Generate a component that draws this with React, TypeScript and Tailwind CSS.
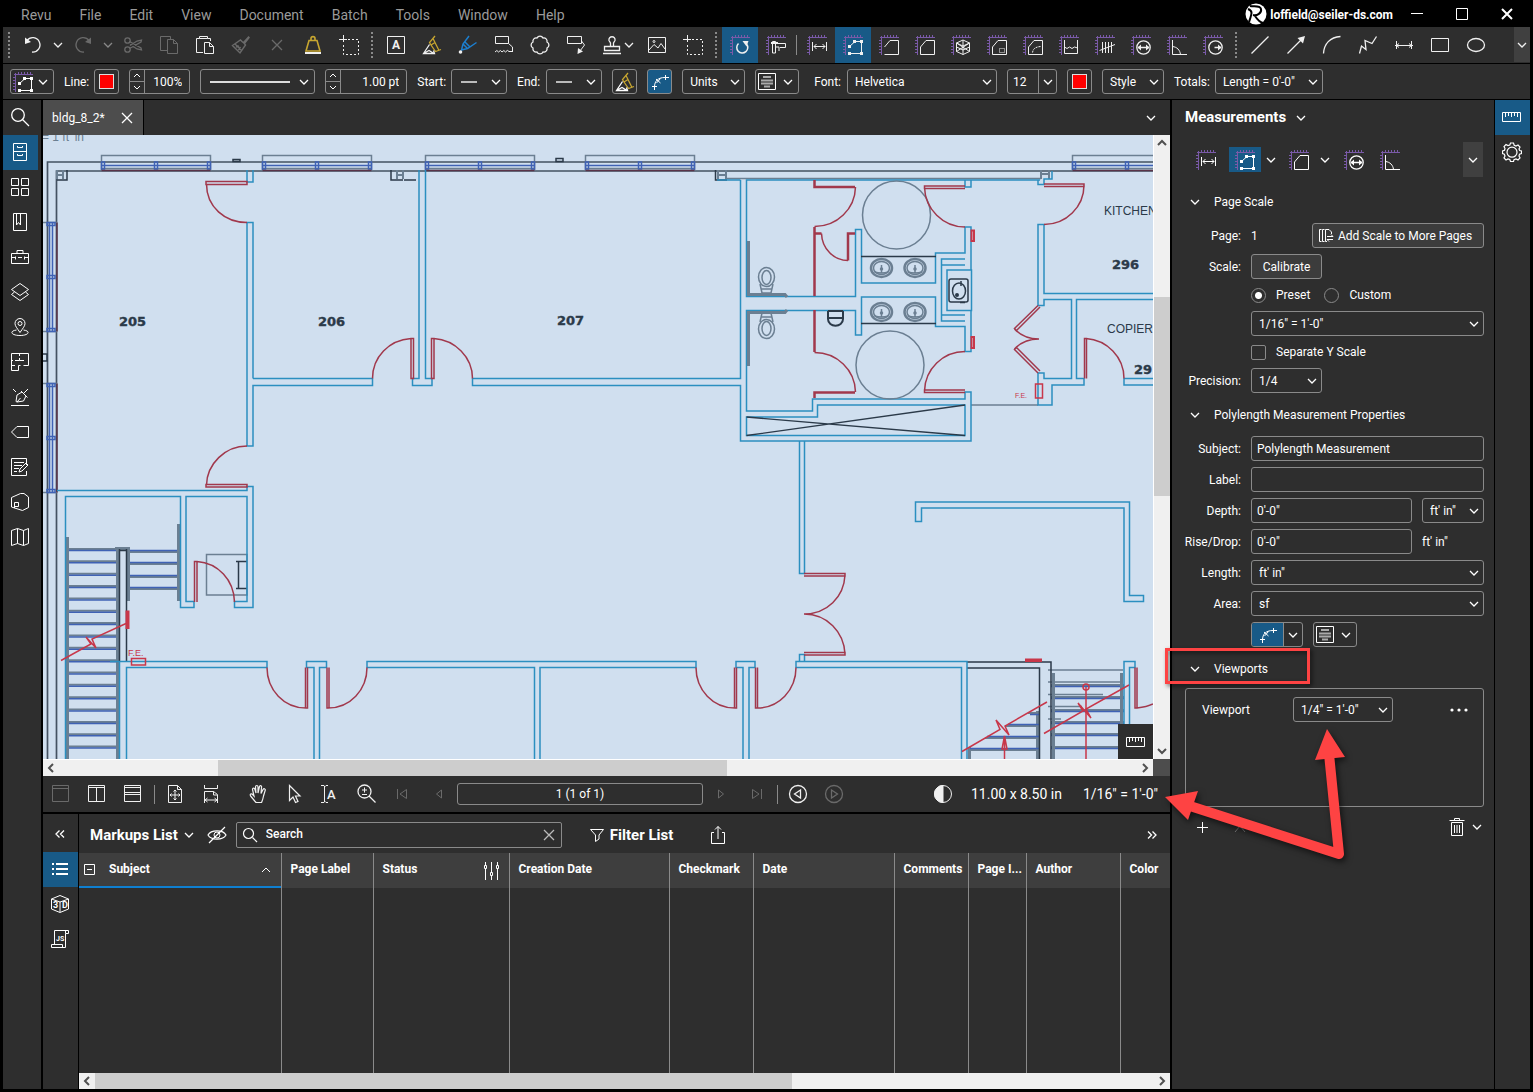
import React from "react";

const PURPLE = "#7a5aa8";
const WALL = "#2b8fc0";
const DOOR = "#a1384c";
const STEEL = "#6b7f92";
const INK = "#2b3a49";
const WINDOW = "#3f62b5";
const RED = "#c8374a";

const field =
  "h-[25px] rounded-[3px] border border-[#8a8a8a] bg-[#2e2e2e] text-xs text-white outline-none";

const Icon = (props: {
  d?: string;
  w?: number;
  h?: number;
  className?: string;
  children?: React.ReactNode;
}) => {
  const w = props.w || 20;
  const h = props.h || w;
  return (
    <svg
      width={w}
      height={h}
      viewBox={`0 0 ${w} ${h}`}
      fill="none"
      stroke="currentColor"
      className={"shrink-0 " + (props.className || "")}
      aria-hidden="true"
    >
      {props.d && <path d={props.d} />}
      {props.children}
    </svg>
  );
};

const Chevron = (props: { className?: string }) => (
  <Icon w={10} h={6} className={props.className}>
    <path strokeWidth="1.3" d="M1 1L5 5L9 1" />
  </Icon>
);

/* ---------- icons ---------- */

const Ruled = (props: { d?: string; children?: React.ReactNode }) => (
  <Icon>
    <path
      stroke={PURPLE}
      d="M1 2.5H20M2.5 1V20M5.5 0V2M8.5 0V2M11.5 0V2M14.5 0V2M17.5 0V2M0 5.5H2M0 8.5H2M0 11.5H2M0 14.5H2M0 17.5H2"
    />
    {props.d && <path d={props.d} />}
    {props.children}
  </Icon>
);

const LengthIcon = () => (
  <Ruled d="M5.5 7V16M19.5 7V16M7 11.5H18M9.5 9L7 11.5L9.5 14M15.5 9L18 11.5L15.5 14" />
);

const PolylengthIcon = () => (
  <Ruled d="M6 12L12 6.5H18.5V18.5H6">
    <path
      fill="currentColor"
      stroke="none"
      d="M5 10h3v3h-3zM10 5h3v3h-3zM17 5h3v3h-3zM17 17h3v3h-3zM5 17h3v3h-3z"
    />
  </Ruled>
);

const AreaIcon = () => <Ruled d="M5.5 19.5V12L11 5.5H19.5V19.5Z" />;

const DiameterIcon = () => (
  <Ruled>
    <circle cx="12.5" cy="12.5" r="6.7" strokeWidth="1.3" />
    <path strokeWidth="1.5" d="M7 12.5H18" />
    <path fill="currentColor" stroke="none" d="M6.5 12.5L10 9.5V15.5ZM18.5 12.5L15 9.5V15.5Z" />
  </Ruled>
);

const AngleIcon = () => (
  <Ruled d="M5.5 5V19.5H20M5.5 11.5C10 12 13 15 13.5 19.5" />
);

const RulerIcon = () => (
  <Icon w={20} h={12} d="M.5 1.5H18.5V10.5H.5ZM3.5 2V6M6.5 2V5M9.5 2V6M12.5 2V5M15.5 2V6" />
);

const SnipIcon = () => (
  <Icon>
    <path d="M4.5 0V7M0 4.5H8" />
    <path strokeDasharray="2 2" d="M9 4.5H19.5V19.5H4.5V8" />
  </Icon>
);

const HighlightIcon = () => (
  <Icon>
    <path
      stroke="#c7a630"
      strokeWidth="1.3"
      d="M13 1L7.5 7.5L9 10L13.5 16.5L19 14.5M11 3.5L17 15.5M9 10L13 7.5"
    />
    <path strokeWidth="1.3" d="M7.5 9.5L1.5 18.5H12.5L11.5 15.5M1.5 18.5L7 15.5L12 18.5" />
  </Icon>
);

const CurveIcon = () => (
  <Icon
    w={18}
    h={18}
    d="M3.5 17V14C3.5 8 7 4.5 14 4.5H18M1 13.5H6M14.5 2V7M5 6L9.5 10M9.5 5.5L5.5 10"
  />
);

const AlignIcon = () => (
  <Icon w={18} h={18}>
    <path d="M.5 .5H17.5V16.5H.5Z" />
    <path stroke="#aaa" strokeWidth="2" d="M5 4H13M3 7.5H15M3 10.5H15M6 13.5H12" />
  </Icon>
);

const Magnifier = () => (
  <Icon>
    <circle cx="8" cy="8" r="6.3" strokeWidth="1.3" />
    <path strokeWidth="1.3" d="M12.5 12.5L19 19" />
  </Icon>
);

const CloseX = (props: { className?: string }) => (
  <Icon w={12} className={props.className}>
    <path strokeWidth="1.3" d="M1 1L11 11M11 1L1 11" />
  </Icon>
);

/* ---------- small controls ---------- */

const ToolButton = (props: {
  label: string;
  active?: boolean;
  dim?: boolean;
  children: React.ReactNode;
}) => (
  <button
    aria-label={props.label}
    className={
      "flex h-9 w-9 shrink-0 items-center justify-center " +
      (props.active ? "bg-[#185a87] " : "hover:bg-[#3e3e3e] ") +
      (props.dim ? "text-[#6a6a6a]" : "text-[#f0f0f0]")
    }
  >
    {props.children}
  </button>
);

const MiniDrop = (props: { label: string; dim?: boolean }) => (
  <button
    aria-label={props.label}
    className={
      "flex h-9 w-[14px] shrink-0 items-center justify-center " +
      (props.dim ? "text-[#888]" : "text-[#f0f0f0]")
    }
  >
    <Chevron />
  </button>
);

const Grip = () => (
  <div className="mx-1 h-[26px] w-[3px] shrink-0 border-l-2 border-dotted border-[#8a8a8a]" />
);

const Select = (props: {
  label: string;
  id?: string;
  value: string;
  className?: string;
}) => (
  <span className={"relative inline-flex " + (props.className || "")}>
    <select
      id={props.id}
      aria-label={props.id ? undefined : props.label}
      className={field + " w-full appearance-none pr-5 pl-[7px]"}
      defaultValue={props.value}
    >
      <option>{props.value}</option>
    </select>
    <Chevron className="pointer-events-none absolute top-[10px] right-[5px]" />
  </span>
);

const IconDrop = (props: {
  label: string;
  className?: string;
  children: React.ReactNode;
}) => (
  <button
    aria-label={props.label}
    aria-haspopup="listbox"
    className={
      field + " flex items-center justify-between pr-[5px] pl-[2px] " + (props.className || "")
    }
  >
    {props.children}
    <Chevron />
  </button>
);

const Stepper = (props: { label: string; value: string; className: string }) => (
  <div className={field + " flex overflow-hidden " + props.className}>
    <div className="flex w-[15px] shrink-0 flex-col divide-y divide-[#8a8a8a] border-r border-[#8a8a8a]">
      <button aria-label={props.label + " up"} className="flex flex-1 items-center justify-center">
        <Icon w={8} h={5} d="M1 4L4 1L7 4" />
      </button>
      <button aria-label={props.label + " down"} className="flex flex-1 items-center justify-center">
        <Icon w={8} h={5} d="M1 1L4 4L7 1" />
      </button>
    </div>
    <input
      aria-label={props.label}
      className="w-full min-w-0 bg-transparent pr-[7px] text-right text-xs outline-none"
      defaultValue={props.value}
    />
  </div>
);

const Swatch = (props: { label: string }) => (
  <button
    aria-label={props.label}
    className="flex h-[25px] w-[25px] shrink-0 items-center justify-center rounded-[3px] border border-[#8a8a8a]"
  >
    <span className="h-[15px] w-[15px] border border-[#ddd] bg-[#f00]" />
  </button>
);

const ScrollArrow = (props: { label: string; d: string }) => (
  <button
    aria-label={props.label}
    className="flex h-4 w-4 shrink-0 items-center justify-center text-[#505050]"
  >
    <Icon w={10}>
      <path strokeWidth="2" d={props.d} />
    </Icon>
  </button>
);

/* ---------- top bars ---------- */

const menus = ["Revu", "File", "Edit", "View", "Document", "Batch", "Tools", "Window", "Help"];

const TitleBar = () => (
  <header className="flex h-[27px] items-center bg-black pr-[17px] pl-[18px]">
    <nav className="flex gap-7 pt-[3px] text-sm text-[#9a9a9a]">
      {menus.map((m) => (
        <button key={m}>{m}</button>
      ))}
    </nav>
    <div className="ml-auto flex items-center gap-[3px] text-xs font-bold text-white">
      <Icon w={22}>
        <circle cx="11" cy="11" r="10.5" fill="#fff" stroke="none" />
        <path
          stroke="#000"
          strokeWidth="2"
          d="M5 3C9 4 15 2 16 6C17 10 12 13 8 12M3 6C8 8 7 10 4 19M10 13C12 16 14 19 18 20"
        />
      </Icon>
      <span className="pt-[3px]">loffield@seiler-ds.com</span>
    </div>
    <div className="ml-[18px] flex items-center gap-[33px] text-white">
      <button aria-label="Minimize">
        <Icon w={12} d="M0 5.5H12" />
      </button>
      <button aria-label="Maximize">
        <Icon w={12} d="M.5 .5H11.5V11.5H.5Z" />
      </button>
      <button aria-label="Close">
        <Icon w={12}>
          <path strokeWidth="2" d="M1 1L11 11M11 1L1 11" />
        </Icon>
      </button>
    </div>
  </header>
);

const MainToolbar = () => (
  <div className="flex h-9 items-center bg-[#2e2e2e] pl-px">
    <Grip />
    <ToolButton label="Undo">
      <Icon>
        <path strokeWidth="1.3" d="M4 5.5A7.2 7.2 0 1 1 9 17" />
        <path fill="currentColor" stroke="none" d="M2 2.5V9L8 7Z" />
      </Icon>
    </ToolButton>
    <MiniDrop label="Undo history" />
    <ToolButton label="Redo" dim>
      <Icon>
        <path strokeWidth="1.3" d="M16 5.5A7.2 7.2 0 1 0 11 17" />
        <path fill="currentColor" stroke="none" d="M18 2.5V9L12 7Z" />
      </Icon>
    </ToolButton>
    <MiniDrop label="Redo history" dim />
    <ToolButton label="Cut" dim>
      <Icon>
        <path
          strokeWidth="1.3"
          d="M6.5 6.5L18 13L18.5 15L14 14L7 9.5M6.5 13.5L18 7L18.5 5L14 6L7 10.5"
        />
        <circle cx="4.5" cy="5.5" r="2.7" strokeWidth="1.3" />
        <circle cx="4.5" cy="14.5" r="2.7" strokeWidth="1.3" />
      </Icon>
    </ToolButton>
    <ToolButton label="Copy" dim>
      <Icon d="M8 15.5H1.5V1.5H11.5V4M8.5 4.5H14.5L18.5 8.5V18.5H8.5ZM14.5 4.5V8.5H18.5" />
    </ToolButton>
    <ToolButton label="Paste">
      <Icon d="M8 17.5H1.5V3.5H4.5V1.5H12.5V3.5H15.5V6M4.5 3.5H12.5M9.5 7.5H14.5L18.5 11.5V18.5H9.5ZM14.5 7.5V11.5H18.5" />
    </ToolButton>
    <ToolButton label="Format painter" dim>
      <Icon>
        <path
          strokeWidth="1.4"
          d="M18 1.5L12.5 7.5L14.5 10L9 18L1.500 10.5L9.5 5L12 7.5M18.500 2L13 9M4 9L10.500 15.500M5 12L8 11M7.500 15L9.500 12"
        />
      </Icon>
    </ToolButton>
    <ToolButton label="Delete" dim>
      <CloseX />
    </ToolButton>
    <ToolButton label="Weight">
      <Icon>
        <path stroke="#c7a630" strokeWidth="1.6" d="M6 5.5H14L17 16H3ZM8 5V3.5C8 1 12 1 12 3.5V5" />
        <path strokeWidth="2" d="M2 18H18" />
      </Icon>
    </ToolButton>
    <ToolButton label="Snapshot">
      <SnipIcon />
    </ToolButton>
    <Grip />
    <ToolButton label="Text box">
      <Icon d="M1.5 1.5H18.5V18.5H1.5Z">
        <text
          x="10"
          y="14"
          textAnchor="middle"
          fontSize="12"
          fontWeight="700"
          fill="currentColor"
          stroke="none"
        >
          A
        </text>
      </Icon>
    </ToolButton>
    <ToolButton label="Highlight">
      <HighlightIcon />
    </ToolButton>
    <ToolButton label="Pen">
      <Icon>
        <path
          stroke="#1c7fcf"
          strokeWidth="1.5"
          d="M11 1L5 9L3.5 15L9.5 13.5L18.5 7.5M5 9L9.5 13.5M7 7L12 12"
        />
        <circle cx="2.5" cy="17" r="1.8" fill="currentColor" stroke="none" />
      </Icon>
    </ToolButton>
    <ToolButton label="Eraser">
      <Icon d="M1.5 1.5H14.5V8.5H1.5ZM14.5 8.5L18.5 12V16M1 17Q3 14 4.5 17Q6.5 14 8 17Q10 14 11.5 17Q13.5 14 15 16.500H19" />
    </ToolButton>
    <ToolButton label="Cloud">
      <Icon>
        <path
          strokeWidth="1.3"
          d="M7 3A3.3 3.3 0 0 1 13 3A3.3 3.3 0 0 1 17 7A3.3 3.3 0 0 1 17 13A3.3 3.3 0 0 1 13 17A3.3 3.3 0 0 1 7 17A3.3 3.3 0 0 1 3 13A3.3 3.3 0 0 1 3 7A3.3 3.3 0 0 1 7 3Z"
        />
      </Icon>
    </ToolButton>
    <ToolButton label="Callout">
      <Icon d="M1.5 1.5H15.5V8.5H1.5ZM15.5 6L18.5 10L14 16">
        <path fill="currentColor" stroke="none" d="M11.5 19L12 13L17 16.5Z" />
      </Icon>
    </ToolButton>
    <ToolButton label="Stamp">
      <Icon>
        <path
          strokeWidth="1.3"
          d="M8.5 11.5V8L7 5.5C6 .5 14 .5 13 5.5L11.5 8V11.5M2.5 15.500V11.500H17.500V15.500ZM1 18.500H19"
        />
      </Icon>
    </ToolButton>
    <div className="mr-[3px] -ml-2">
      <MiniDrop label="Stamps" />
    </div>
    <ToolButton label="Image">
      <Icon d="M1.5 2.5H18.5V17.5H1.5ZM2 15L7 9.5L11 13L14 8.5L18 14">
        <circle cx="7" cy="6.5" r="1" />
      </Icon>
    </ToolButton>
    <ToolButton label="Crop image">
      <SnipIcon />
    </ToolButton>
    <Grip />
    <ToolButton label="Calibrate" active>
      <Ruled>
        <path strokeWidth="1.5" d="M8.5 8.5A5.5 5.5 0 1 0 16.5 9" />
        <path fill="currentColor" stroke="none" d="M12.5 6L18.5 6L16.5 11.5Z" />
      </Ruled>
    </ToolButton>
    <ToolButton label="Measure">
      <Ruled d="M6.5 18V6.5H9.5V18ZM9.5 8.5H19.5V12.5H14M9.5 12H13V16">
        <path strokeWidth="2" d="M5 8H12" />
      </Ruled>
    </ToolButton>
    <div className="mx-[2px] h-5 w-px shrink-0 bg-[#8a8a8a]" />
    <ToolButton label="Length">
      <LengthIcon />
    </ToolButton>
    <ToolButton label="Polylength" active>
      <PolylengthIcon />
    </ToolButton>
    <ToolButton label="Perimeter">
      <Ruled d="M5.5 12L11 5.5H19.5V19.5H5.5" />
    </ToolButton>
    <ToolButton label="Area">
      <AreaIcon />
    </ToolButton>
    <ToolButton label="Volume">
      <Ruled d="M12 5L18.5 8V16.5L12 19.5L5.5 16.5V8ZM5.5 8L12 11L18.5 8M12 5V19.5M5.5 12L12 15L18.5 12M5.5 16.5L18.5 8M18.5 16.5L5.5 8" />
    </ToolButton>
    <ToolButton label="Polygon cutout">
      <Ruled d="M5.5 19.5V12L11 5.5H19.5V19.5Z">
        <path strokeDasharray="1 1" d="M12.5 17.5V13.5H17.5V17.5Z" />
      </Ruled>
    </ToolButton>
    <ToolButton label="Ellipse cutout">
      <Ruled d="M5.5 19.5V12L11 5.5H19.5V19.5Z">
        <path strokeDasharray="2 1" d="M9.5 17.5C10 14 12 12 17.5 11.5" />
      </Ruled>
    </ToolButton>
    <ToolButton label="Dynamic fill">
      <Ruled d="M5.5 5V18.5H18.5V5M5.5 12L8 13.5L10.5 12L13 13.5L15.5 12L18.5 13" />
    </ToolButton>
    <ToolButton label="Count">
      <Ruled d="M7.5 7V18M10.5 7V18M13.5 7V18M16.5 7V18M4.5 15.5L20 9.5" />
    </ToolButton>
    <ToolButton label="Diameter">
      <DiameterIcon />
    </ToolButton>
    <ToolButton label="Angle">
      <AngleIcon />
    </ToolButton>
    <ToolButton label="Radius">
      <Ruled>
        <circle cx="12.5" cy="12.5" r="6.7" strokeWidth="1.3" />
        <path strokeWidth="1.5" d="M11.5 12.5H18" />
        <path fill="currentColor" stroke="none" d="M18.5 12.5L15 9.5V15.5Z" />
      </Ruled>
    </ToolButton>
    <Grip />
    <ToolButton label="Line">
      <Icon>
        <path strokeWidth="1.3" d="M1.5 18.5L18.5 1.5" />
      </Icon>
    </ToolButton>
    <ToolButton label="Arrow">
      <Icon>
        <path strokeWidth="1.3" d="M1.5 18.5L15 5" />
        <path fill="currentColor" stroke="none" d="M19 1L17 8.5L11.5 3Z" />
      </Icon>
    </ToolButton>
    <ToolButton label="Arc">
      <Icon>
        <path strokeWidth="1.3" d="M1.5 18.5C2 9 8 2 18.5 1.5" />
      </Icon>
    </ToolButton>
    <ToolButton label="Polyline">
      <Icon>
        <path strokeWidth="1.3" d="M1.5 18.5L3.5 11L8 14.5L7 5.5L14 8.5L18.5 1.5" />
      </Icon>
    </ToolButton>
    <ToolButton label="Dimension">
      <Icon d="M2.5 6V14M17.5 6V14M1 10.5H19M5 8.5L2.5 10.5L5 12.5M15 8.5L17.5 10.5L15 12.5" />
    </ToolButton>
    <ToolButton label="Rectangle">
      <Icon d="M1.5 3.5H18.5V16.5H1.5Z" />
    </ToolButton>
    <ToolButton label="Ellipse">
      <Icon>
        <ellipse cx="10" cy="10" rx="8.5" ry="6.5" strokeWidth="1.3" />
      </Icon>
    </ToolButton>
    <button
      aria-label="More tools"
      className="ml-auto flex h-[35px] w-4 items-center justify-center self-start bg-[#404040] text-[#f0f0f0]"
    >
      <Chevron />
    </button>
  </div>
);

const PropertyBar = () => (
  <div className="mt-px flex h-[35px] items-center gap-[10px] bg-[#2e2e2e] pl-[7px] text-xs text-white">
    <IconDrop label="Tool" className="w-11">
      <PolylengthIcon />
    </IconDrop>
    <div className="flex items-center gap-[5px]">
      Line: <Swatch label="Line color" />
    </div>
    <Stepper label="Opacity" value="100%" className="w-[61px]" />
    <IconDrop label="Line style" className="w-[115px]">
      <span className="ml-[7px] h-[2px] w-20 bg-[#ddd]" />
    </IconDrop>
    <Stepper label="Line width" value="1.00 pt" className="w-[82px]" />
    <div className="flex items-center gap-[5px]">
      Start:
      <IconDrop label="Line start" className="w-14">
        <span className="ml-[7px] h-[2px] w-4 bg-[#bbb]" />
      </IconDrop>
    </div>
    <div className="flex items-center gap-[6px]">
      End:
      <IconDrop label="Line end" className="w-14">
        <span className="ml-[7px] h-[2px] w-4 bg-[#bbb]" />
      </IconDrop>
    </div>
    <button
      aria-label="Highlight fill"
      className={field + " flex w-[25px] items-center justify-center"}
    >
      <HighlightIcon />
    </button>
    <button
      aria-label="Curve"
      className="flex h-[25px] w-[25px] items-center justify-center rounded-[3px] border border-[#8a8a8a] bg-[#185a87]"
    >
      <CurveIcon />
    </button>
    <Select label="Units" value="Units" className="w-[63px]" />
    <IconDrop label="Alignment" className="w-11">
      <AlignIcon />
    </IconDrop>
    <div className="ml-[5px] flex items-center gap-[6px]">
      <label htmlFor="font">Font:</label>
      <Select id="font" label="Font" value="Helvetica" className="w-[150px]" />
    </div>
    <div className={field + " flex w-[50px] overflow-hidden"}>
      <input
        aria-label="Font size"
        className="w-[30px] bg-transparent pl-[5px] outline-none"
        defaultValue="12"
      />
      <button
        aria-label="Font sizes"
        className="flex flex-1 items-center justify-center border-l border-[#8a8a8a]"
      >
        <Chevron />
      </button>
    </div>
    <Swatch label="Text color" />
    <Select label="Style" value="Style" className="w-[62px]" />
    <div className="flex items-center gap-[5px]">
      <label htmlFor="totals">Totals:</label>
      <Select id="totals" label="Totals" value={`Length = 0'-0"`} className="w-[108px]" />
    </div>
  </div>
);

/* ---------- left rail ---------- */

const railIcons = [
  { label: "File access", d: "M3.5 1.5H16.5V18.5H3.5ZM3.5 9.5H16.5M7.5 4V5.5H12.5V4M7.5 12V13.5H12.5V12" },
  { label: "Thumbnails", d: "M1.5 1.5H8.5V8.5H1.5ZM11.5 1.5H18.5V8.5H11.5ZM1.5 11.5H8.5V18.5H1.5ZM11.5 11.5H18.5V18.5H11.5Z" },
  { label: "Bookmarks", d: "M3.5 1.5H16.5V18.5H3.5ZM6.5 1.5V13L8.5 10.5L10.5 13V1.5" },
  { label: "Tool chest", d: "M1.5 6.5H18.5V16.5H1.5ZM7 6V3.5H13V6M1.5 10.5H5M8 10.5H12M15 10.5H18.5M5.5 9.5V12.5M14.5 9.5V12.5" },
  { label: "Layers", d: "M10 1.5L18.5 7.5L10 13.5L1.5 7.5ZM4.5 10L1.5 12.5L10 18.5L18.5 12.5L15.5 10" },
  { label: "Places", d: "M10 15.5C7 11 5 9 5 6.5A5 5 0 0 1 15 6.5C15 9 13 11 10 15.5ZM6.5 13C-1 14 1 18.5 10 18.5S21 14 13.5 13M10 4.5A2 2 0 1 1 10 8.5A2 2 0 1 1 10 4.5" },
  { label: "Spaces", d: "M1.5 1.5H18.5V13.5H13.5M10.5 13.5H8.5V18.5H1.5V1.5M9.5 1.5V4M9.5 6V8.5H5M1.5 8.5H3M9.5 8.5H14M5 13.5H1.5" },
  { label: "Signatures", d: "M1 18.5H19M6 14.5L7 8L12 5L16 9L13.5 14L7 15ZM11 4L17.5 10.5M14 6L18 2M7 15L10.5 11M3 2L6 5" },
  { label: "Tags", d: "M1.5 10L7 4.5H18.5V15.5H7Z" },
  { label: "Forms", d: "M16.5 8V1.5H1.5V18.5H16.5V14M4 5.5H14M4 8.5H12M4 11.5H9M4 14.5H7M9 15L10 12L16 6L18 8L12 14Z" },
  { label: "3D model", d: "M1.5 5.5L10.5 1.5L14 1.5L18.5 5V15.5L12.5 18.5L1.5 15ZM4.5 16V10.5H8.5V14.5H4.5" },
  { label: "Sets", d: "M1.5 3.5L7.5 1.5L13.5 3.5L18.5 1.5V16.5L13.5 18.5L7.5 16.5L1.5 18.5ZM7.5 1.5V16.5M13.5 3.5V18.5" },
];

const LeftRail = () => (
  <aside className="flex w-[38px] shrink-0 flex-col bg-[#2e2e2e] text-white">
    <button
      aria-label="Search"
      className="flex h-[35px] w-[35px] items-center justify-center pr-px pb-px"
    >
      <Magnifier />
    </button>
    {railIcons.map((r, i) => (
      <button
        key={r.label}
        aria-label={r.label}
        className={
          "flex h-[35px] w-[35px] items-center justify-center pr-px pb-px " +
          (i === 0 ? "bg-[#185a87]" : "")
        }
      >
        <Icon d={r.d} />
      </button>
    ))}
  </aside>
);

/* ---------- floor plan ---------- */

const leftTreads = Array.from({ length: 17 }, (_, i) => 550 + i * 12.35);
const rightTreads = [686, 698, 711, 723, 735, 748];

const TopWindow = (props: { x: number }) => {
  const x = props.x;
  return (
    <g>
      <rect x={x} y="155.5" width="109" height="15" stroke={STEEL} />
      <path stroke={STEEL} d={`M${x} 168.5h109`} />
      <path
        stroke={WINDOW}
        d={`M${x} 165.5h109M${x} 162h3v7h-3zM${x + 53} 162h3v7h-3zM${x + 106} 162h3v7h-3z`}
      />
      <path stroke="#5a3448" d={`M${x} 170.5h109`} />
    </g>
  );
};

const SideWindow = (props: { y: number }) => {
  const y = props.y;
  return (
    <g>
      <path stroke={STEEL} d={`M43 ${y}h14M43 ${y + 109}h14`} />
      <path stroke="#5a3448" d={`M57 ${y}v109`} />
      <path
        stroke={WINDOW}
        d={`M49.5 ${y}v109M52.5 ${y}v109M47 ${y}h8v3h-8zM47 ${y + 53}h8v3h-8zM47 ${y + 106}h8v3h-8z`}
      />
    </g>
  );
};

const Basin = (props: { x: number; y: number }) => (
  <g stroke={STEEL}>
    <ellipse cx={props.x} cy={props.y} rx="10.5" ry="9" strokeWidth="2.5" />
    <ellipse cx={props.x} cy={props.y} rx="8" ry="6.5" />
    <path d={`M${props.x - 7} ${props.y + 4}q7 2 14 0M${props.x} ${props.y - 3}v8`} />
    <circle cx={props.x} cy={props.y + 1} r="1" />
  </g>
);

const FloorPlan = () => (
  <svg
    viewBox="43 135 1110 624"
    preserveAspectRatio="xMinYMin slice"
    className="block h-[624px] w-full bg-[#d0dfef]"
    fill="none"
    strokeWidth="1.5"
    role="img"
    aria-label="Floor plan bldg_8_2"
  >
    <text x="42" y="141" fontSize="12" fill={STEEL} fontFamily="Liberation Sans, sans-serif">
      = 1 ft' in"
    </text>

    {/* outer shell */}
    <g stroke={INK}>
      <path d="M47.5 759V162H1153M56.5 759V171H1153" strokeWidth="1.7" opacity=".85" />
      <path d="M233 159.5h7v2h-7zM556 158.5h7v3h-7zM43 354h4v7h-4M404 180H416M391 170v10h12" />
      <path d="M57 180H67V170M715.5 170V180H727" />
    </g>
    <g stroke={STEEL}>
      <path
        strokeWidth="2"
        d="M57 170v9M63 170v9M57 175h6M397 170v9M403 170v9M397 175h6M718 170v9M726 170v9M718 175h8M1041 170v9M1049 170v9M1041 174h8"
      />
      <path d="M727 178.5H1041M971 405H1038" />
    </g>
    <TopWindow x={101.5} />
    <TopWindow x={262.5} />
    <TopWindow x={425.5} />
    <TopWindow x={585.5} />
    <TopWindow x={1072.5} />
    <SideWindow y={222.5} />
    <SideWindow y={383.5} />

    {/* stairs, left core */}
    {leftTreads.map((y) => (
      <g key={y}>
        <path stroke={STEEL} strokeWidth="2" d={`M66 ${y - 1}H119`} />
        <path stroke={WINDOW} d={`M66 ${y + 0.5}H119`} />
      </g>
    ))}
    {[551, 563, 576, 588].map((y) => (
      <g key={y}>
        <path stroke={STEEL} strokeWidth="2" d={`M128 ${y + 1}H180`} />
        <path stroke={WINDOW} d={`M128 ${y - 0.5}H180`} />
      </g>
    ))}
    <path
      stroke={STEEL}
      strokeWidth="3"
      d="M67.5 537V759M117.5 549V759M128.5 549V601M178.5 524V601M115 548.5H130"
    />
    <path stroke={INK} d="M119.5 549V662M126.5 549V662M119 550.5H127" />
    <path stroke={STEEL} d="M206.5 554.5H247V595H206.5Z" />
    <path stroke={INK} d="M238.5 561V588M236 561.5H247M236 588.5H247" />

    {/* stairs, right core */}
    {rightTreads.map((y) => (
      <g key={y}>
        <path stroke={STEEL} strokeWidth="2" d={`M1051 ${y - 1}H1124`} />
        <path stroke={WINDOW} d={`M1051 ${y + 0.5}H1124`} />
      </g>
    ))}
    <path
      stroke={STEEL}
      strokeWidth="3"
      d="M1053.5 673V759M1121.5 673V724M1037.5 711V759M969.5 747V759"
    />
    <path
      stroke={STEEL}
      d="M1048 670H1123M1048 682H1123M1048 694.5H1103M1048 706.5H1082M1048 719H1061"
    />
    <path stroke={STEEL} strokeWidth="2" d="M1028 713H1039M1006 726H1040M985 738H1040M970 750H1040" />
    <path stroke={WINDOW} d="M1030 714.5H1039M1008 724.5H1040M987 736.5H1040M970 748.5H1040" />
    <path stroke={INK} d="M967 662H1051V759M967 668H1039.5V759" />

    {/* interior walls */}
    <g stroke={WALL}>
      <path d="M247 170V182H253V170M253 378.5V222.5H247V446H253V385.5H372.5V378.5H253" />
      <path d="M419 170V378.5H412.5V385.5H432V378.5H425.5V170" />
      <path d="M740.5 180V378.5H472.5V385.5H740.5V441H971V392H965V399H812.5V411H746.5V310.5H855.5V335H861.5V297H935.5V326.5H965V351.5H971V310" />
      <path d="M717 180H740.5M1040 180H746.5V296.5H855.5V229.5H861.5V283H935.5V253H965V227H971V270" />
      <path d="M965 259H941.5V321H965M965 265H941.5M965 315H941.5M947 270H971.5V310.5H947Z" />
      <path d="M746.5 417H817.5V405H965V435.5H746.5Z" />
      <path d="M965 180V187H971V180M1038 180V184.5H1044V179H1052V171" />
      <path d="M1153 293.5H1044V224.5H1038V305.5H1044V299.5H1071.5V378.5H1044V373H1038V405H1052V385H1084V378.5H1076.5V299.5H1153" />
      <path d="M1153 378.5H1124V385H1153" />
      <path d="M57 490.5H247V486.5H253V607.5H234.5V601.5H247V496.5H186V601.5H194V607.5H180.5V496.5H65.5V759" />
      <path d="M110 661.5H267V667.5H126.5V759M119.5 662V759" />
      <path d="M314 759V667.5H306.5V661.5H326.5V667.5H319.5V759" />
      <path d="M534.5 759V667.5H367V661.5H696V667.5H540V759" />
      <path d="M743 759V667.5H736V661.5H755V667.5H749V759" />
      <path d="M799.5 441V573.5H804.5V441M799.5 661V654.5H804.5V661M967 759V661.5H796V667.5H961.5V759" />
      <path d="M915.5 502H1129.5V595.5H1143.5V601.5H1124V508H921.5V521.5H915.5Z" />
      <path d="M1124 759V661.5H1135V667.5H1129.5V759" />
    </g>
    <path
      stroke={INK}
      strokeWidth="1.3"
      d="M746.5 417L965 435.5M746.5 435.5L965 405M861 256.5H936M861 323.5H936"
    />

    {/* washrooms */}
    <circle cx="896.5" cy="215" r="34" stroke={STEEL} />
    <circle cx="890" cy="365" r="34" stroke={STEEL} />
    <Basin x={881.5} y={268} />
    <Basin x={915} y={268} />
    <Basin x={881.5} y={312} />
    <Basin x={915} y={312} />
    <g stroke={STEEL}>
      <ellipse cx="766.5" cy="277" rx="8" ry="9.5" />
      <ellipse cx="766.5" cy="277.5" rx="4.5" ry="7" />
      <path d="M760 284L762 293H771L773 284M761 289H772" />
      <ellipse cx="766.5" cy="329" rx="8" ry="9.5" />
      <ellipse cx="766.5" cy="328.5" rx="4.5" ry="7" />
      <path d="M760 322L762 313H771L773 322M761 317H772" />
      <path strokeWidth="3" d="M748.5 241V294.5H785L787 297M748.5 366V312.5H785L787 310" />
    </g>
    <g stroke={INK} strokeWidth="2">
      <path d="M828 311V319C828 328 843 328 843 319V311M828 318H843" />
      <path d="M828 311H843" />
      <rect x="949" y="279" width="19" height="23" rx="2" strokeWidth="1.5" />
      <ellipse cx="959" cy="291" rx="6.5" ry="8" strokeWidth="1.5" />
      <path strokeWidth="1.5" d="M961 281V286M960 302.5H965" />
      <circle cx="957" cy="295" r="1" />
    </g>

    {/* doors */}
    <g stroke={DOOR}>
      <path d="M247 181.5H206V184.5H247ZM206.5 184C206.5 207 225 222.5 247 222.5" />
      <path d="M206 484.5H247V487H206ZM206.5 485C207 464 225 446 247 446" />
      <path d="M411 338.5H413.5V378.5H411ZM411 338.5C389 340 372.5 357 372.5 378.5" />
      <path d="M431.5 338.5H434V378.5H431.5ZM434 338.5C455 340 472.5 357 472.5 378.5" />
      <path
        strokeWidth="2.5"
        d="M814.5 180V187H855M814.5 227V296M814.5 310V352M814.5 398V392.5H855M814.5 233.5H821.5M848 260.5V233.5H855"
      />
      <path d="M855.5 187C855 209 837 226.5 814.5 226.5M814.5 352.5C837 352.5 855 370 855.5 392M821.5 233.5C822 249 834 260.5 848 260.5" />
      <path d="M965 186H924.5V188.5H965M924.5 187C925 209 943 227 965 227" />
      <path d="M965 392.5H924.5V390H965M924.5 391C925 369 943 351.5 965 351.5" />
      <path d="M1044 184H1084V186.5H1044M1084 185C1084 207 1066 224.5 1044 224.5" />
      <path d="M1084.5 378.5V338.5H1086.5V378.5M1086 338.5C1107 340 1124 357 1124 378.5" />
      <path d="M1038 305.5L1014.5 328.5L1016.5 330.5L1040 307M1014.5 329C1021 336 1030 339 1039 339C1030 339 1021 342 1014.5 349M1040 371L1016.5 347.5L1014.5 349.5L1038 373" />
      <path d="M194.5 602V561.5H197V602M197 561.5C218 563 234 580 234.5 602" />
      <path d="M804 573.5H845V576H804M845 575C844 597 827 614 804 614C827 614 844 632 845 654M804 652.5H845V655H804" />
      <path d="M305.5 667.5V708H307.5V667.5M267 667.5C267 690 284 708 306 708" />
      <path d="M327 667.5V708H329V667.5M367 667.5C367 690 350 708 328 708" />
      <path d="M734.5 667.5V708H736.5V667.5M696 667.5C696 690 713 708 735 708" />
      <path d="M755.5 667.5V708H757.5V667.5M796 667.5C796 690 779 708 757 708" />
      <path d="M1135 667.5V708H1137V667.5M1137 708Q1147 707 1153 704" />
    </g>

    {/* life safety and stair marks */}
    <g stroke={RED}>
      <path
        strokeWidth="2"
        d="M971.5 230.5H974V241H971.5ZM971.5 337H974V348H971.5ZM126.5 611.5H128.5V628H126.5ZM1026 659.5H1041V661H1026Z"
      />
      <path d="M1035.5 384H1042.5V398H1035.5ZM131.5 658.5H145.5V665H131.5Z" />
      <path d="M61 660.5L91 644L86 637L96 648L92 639L126 623.5" />
      <path d="M962 751.5L1000 729.5L996 720L1009 735L1005 726L1047 702M1044 733.5L1083 711L1078 703L1091 718L1086 709L1129 685" />
      <path d="M1004.5 759V736L1002 749H1007L1004.5 736M1086 687V759" />
      <circle cx="1086" cy="687" r="3" />
    </g>
    <g fill={RED} fontFamily="Liberation Sans, sans-serif">
      <text x="128" y="656" fontSize="9">
        F.E.
      </text>
      <text x="1015" y="398" fontSize="7">
        F.E.
      </text>
    </g>

    <g
      fill={INK}
      stroke={INK}
      strokeWidth=".4"
      fontFamily="DejaVu Sans, sans-serif"
      fontWeight="700"
      fontSize="13"
    >
      <text x="119" y="326">205</text>
      <text x="318" y="326">206</text>
      <text x="557" y="325">207</text>
      <text x="1112" y="269">296</text>
      <text x="1134" y="374">29</text>
    </g>
    <g fill={INK} fontFamily="Liberation Sans, sans-serif" fontSize="12">
      <text x="1104" y="215">KITCHEN</text>
      <text x="1107" y="333">COPIER</text>
    </g>
  </svg>
);

/* ---------- document area ---------- */

const DocumentView = () => (
  <section>
    <div className="flex h-[35px] items-center justify-between bg-[#2e2e2e] pr-[14px] text-white">
      <div className="flex h-full w-[101px] items-center justify-between border-r border-black bg-[#4d4d4d] pr-[10px] pl-[9px] text-xs">
        <span>bldg_8_2*</span>
        <button aria-label="Close tab">
          <CloseX />
        </button>
      </div>
      <button aria-label="Tabs">
        <Chevron />
      </button>
    </div>
    <div className="flex">
      <div className="relative min-w-0 flex-1 overflow-hidden">
        <FloorPlan />
        <button
          aria-label="Calibration"
          className="absolute right-0 bottom-0 flex h-[35px] w-[35px] items-center justify-center bg-[#2e2e2e] pl-px text-white"
        >
          <RulerIcon />
        </button>
      </div>
      <div className="flex w-[17px] flex-col border-l border-white bg-[#f0f0f0]">
        <ScrollArrow label="Scroll up" d="M1 7L5 3L9 7" />
        <div className="flex-[146]" />
        <div className="flex-[199] bg-[#cdcdcd]" />
        <div className="flex-[247]" />
        <ScrollArrow label="Scroll down" d="M1 3L5 7L9 3" />
      </div>
    </div>
    <div className="flex h-[17px] bg-[#4d4d4d]">
      <div className="flex flex-1 border-t border-white bg-[#f0f0f0]">
        <ScrollArrow label="Scroll left" d="M7 1L3 5L7 9" />
        <div className="flex-[159]" />
        <div className="flex-[509] bg-[#cdcdcd]" />
        <div className="flex-[410]" />
        <ScrollArrow label="Scroll right" d="M3 1L7 5L3 9" />
      </div>
      <div className="w-[17px]" />
    </div>
  </section>
);

const StatusBar = () => (
  <div className="flex h-9 items-center bg-[#2e2e2e] pr-3 text-white">
    <ToolButton label="Unsplit" dim>
      <Icon d="M1.5 1.5H17.5V17.5H1.5ZM1.5 4.5H17.5" />
    </ToolButton>
    <ToolButton label="Split vertical">
      <Icon d="M1.5 1.5H17.5V17.5H1.5ZM1.5 3.5H17.5M9.5 4V17" />
    </ToolButton>
    <ToolButton label="Split horizontal">
      <Icon d="M1.5 1.5H17.5V17.5H1.5ZM1.5 3.5H17.5M1.5 8.5H17.5M1.5 10.5H17.5" />
    </ToolButton>
    <div className="mx-[3px] h-[19px] w-px bg-[#8a8a8a]" />
    <ToolButton label="Fit page">
      <Icon d="M2.5 1.5H11.5L15.5 5.5V18.5H2.5ZM11.5 1.5V5.5H15.5M9 6V16M4 11H14M7.5 7.5L9 6L10.5 7.5M7.5 14.5L9 16L10.5 14.5M5.5 9.5L4 11L5.5 12.5M12.5 9.5L14 11L12.5 12.5" />
    </ToolButton>
    <ToolButton label="Fit width">
      <Icon d="M2.5 1V4.5H15.5V1M2.5 13V7.5H11.5L15.5 10.5V13M11.5 7.5V11H15M2.5 13V19M15.5 13V19M3 16H15M5.5 14L3 16L5.5 18M12.5 14L15 16L12.5 18" />
    </ToolButton>
    <div className="w-[11px]" />
    <ToolButton label="Pan">
      <Icon>
        <path
          strokeWidth="1.2"
          d="M7 18.500L2 12.500C0 10 2.500 9 4 11L5 12L3.500 5.500C3.500 3.500 5.500 4 6 5.500L7 9L6.500 3C6.500 1 9 1 9 3V9L10.500 2.500C11 1 13 1.500 12.500 3.500L12 9.500L14 5.500C15 4 17 5 16 7L14.500 12C14 15 13.500 16 12.500 18.500Z"
        />
      </Icon>
    </ToolButton>
    <ToolButton label="Select">
      <Icon>
        <path strokeWidth="1.2" d="M4.500 1.500V16.500L8 13L10.500 18.500L13 17.500L10.500 12H15Z" />
      </Icon>
    </ToolButton>
    <ToolButton label="Select text">
      <Icon d="M0 1.5H3L4 2.5L5 1.5H7M3.5 2V18M0 18.5H3L4 17.5L5 18.5H7">
        <text x="6" y="15" fontSize="13" fontWeight="500" fill="currentColor" stroke="none">
          A
        </text>
      </Icon>
    </ToolButton>
    <ToolButton label="Zoom">
      <Icon d="M7.5 3.5V8.5M5 6H10M5 10.5H10">
        <circle cx="7.5" cy="7.5" r="6.5" strokeWidth="1.3" />
        <path strokeWidth="1.3" d="M12 12L18.5 18.5" />
      </Icon>
    </ToolButton>
    <ToolButton label="First page" dim>
      <Icon d="M4.5 5V15M13.5 5.5L7 10L13.5 14.5Z" />
    </ToolButton>
    <ToolButton label="Previous page" dim>
      <Icon d="M12.5 6L7.5 10L12.5 14Z" />
    </ToolButton>
    <input
      aria-label="Page"
      className="h-[22px] w-[246px] rounded-[3px] border border-[#8a8a8a] bg-transparent pb-px text-center text-xs outline-none"
      defaultValue="1 (1 of 1)"
    />
    <ToolButton label="Next page" dim>
      <Icon d="M7.5 6L12.5 10L7.5 14Z" />
    </ToolButton>
    <ToolButton label="Last page" dim>
      <Icon d="M14.5 5V15M5.5 5.5L12 10L5.5 14.5Z" />
    </ToolButton>
    <div className="mx-[2px] h-[19px] w-px bg-[#8a8a8a]" />
    <ToolButton label="Previous view">
      <Icon>
        <circle cx="10" cy="10" r="8.5" strokeWidth="1.3" />
        <path strokeWidth="1.3" d="M12.5 6L6.5 10L12.5 14Z" />
      </Icon>
    </ToolButton>
    <ToolButton label="Next view" dim>
      <Icon>
        <circle cx="10" cy="10" r="8.5" strokeWidth="1.3" />
        <path strokeWidth="1.3" d="M7.5 6L13.5 10L7.5 14Z" />
      </Icon>
    </ToolButton>
    <div className="ml-auto flex items-center">
      <ToolButton label="Dimmer">
        <Icon>
          <circle cx="10" cy="10" r="8.5" />
          <path fill="currentColor" d="M10 1.5A8.5 8.5 0 0 0 10 18.5Z" />
        </Icon>
      </ToolButton>
      <span className="ml-[10px] text-sm">11.00 x 8.50 in</span>
      <span className="ml-[21px] text-sm">1/16" = 1'-0"</span>
    </div>
  </div>
);

/* ---------- markups list ---------- */

const columns = [
  { name: "Subject", width: "w-[202px]" },
  { name: "Page Label", width: "w-[92px]" },
  { name: "Status", width: "w-[136px]" },
  { name: "Creation Date", width: "w-[160px]" },
  { name: "Checkmark", width: "w-[84px]" },
  { name: "Date", width: "w-[141px]" },
  { name: "Comments", width: "w-[74px]" },
  { name: "Page I...", width: "w-[58px]" },
  { name: "Author", width: "w-[94px]" },
  { name: "Color", width: "" },
];

const MarkupsTable = () => (
  <table className="w-full flex-1 table-fixed border-collapse text-left text-xs text-white">
    <thead>
      <tr className="h-[35px] bg-[#3e3e3e]">
        {columns.map((c, i) => (
          <th
            key={c.name}
            className={
              "h-[35px] overflow-hidden p-0 font-bold whitespace-nowrap " +
              c.width +
              (i < 9 ? " border-r border-[#8a8a8a]" : "")
            }
          >
            {i === 0 ? (
              <div className="flex h-[35px] items-center border-b-2 border-[#0f7fd0] pr-[10px] pl-[5px]">
                <button aria-label="Collapse all">
                  <Icon w={11} d="M.5 .5H10.5V10.5H.5ZM3 5.5H8" />
                </button>
                <span className="mr-auto ml-[14px] pb-[2px]">{c.name}</span>
                <Icon w={10} h={6} d="M1 5L5 1L9 5" />
              </div>
            ) : (
              <div className="flex h-[35px] items-center justify-between pb-1 pl-[9px]">
                <span>{c.name}</span>
                {c.name === "Status" && (
                  <Icon
                    w={18}
                    className="mt-1 mr-[9px]"
                    d="M3.5 0V3M3.5 7V18M9.5 0V10M9.5 14V18M15.5 0V3M15.5 7V18M2.5 3.5H4.5V6.5H2.5ZM8.5 10.5H10.5V13.5H8.5ZM14.5 3.5H16.5V6.5H14.5Z"
                  />
                )}
              </div>
            )}
          </th>
        ))}
      </tr>
    </thead>
    <tbody>
      <tr className="h-[185px]">
        {columns.map((c, i) => (
          <td key={c.name} className={i < 9 ? "border-r border-[#8a8a8a]" : ""} />
        ))}
      </tr>
    </tbody>
  </table>
);

const MarkupsPanel = () => (
  <section className="mt-[2px] flex flex-1 bg-[#2e2e2e] text-white">
    <div className="flex w-9 shrink-0 flex-col border-r border-black">
      <button aria-label="Collapse" className="flex h-[38px] items-center justify-center pt-[2px] pr-px">
        <Icon w={10}>
          <path strokeWidth="1.3" d="M4.5 1.5L1 5L4.5 8.5M9 1.5L5.5 5L9 8.5" />
        </Icon>
      </button>
      <button
        aria-label="Markups"
        className="flex h-[35px] items-center justify-center bg-[#185a87] pr-px pb-px"
      >
        <Icon w={18}>
          <path strokeWidth="2" d="M1 4H3M1 9H3M1 14H3M5 4H17M5 9H17M5 14H17" />
        </Icon>
      </button>
      <button
        aria-label="3D model tree"
        className="flex h-[35px] items-center justify-center pr-px pb-px"
      >
        <Icon d="M1.5 5L10 1.5L18.5 5V15L10 18.5L1.5 15ZM1.5 5L10 8L18.5 5M10 8V18">
          <text x="3" y="14" fontSize="9" fontWeight="700" fill="currentColor" stroke="none">
            3
          </text>
          <text x="12" y="14" fontSize="9" fontWeight="700" fill="currentColor" stroke="none">
            D
          </text>
        </Icon>
      </button>
      <button
        aria-label="JavaScript"
        className="flex h-[35px] items-center justify-center pr-px pb-px"
      >
        <Icon d="M4.5 15V1.5H18.5V4.5H15.5V18.5H1.5V15.5H12.5V18.5M15.5 4.5V1.5">
          <text x="6" y="12" fontSize="7" fontWeight="700" fill="currentColor" stroke="none">
            JS
          </text>
        </Icon>
      </button>
    </div>
    <div className="flex min-w-0 flex-1 flex-col">
      <div className="flex h-[39px] items-center pt-[2px] pr-[13px] pl-[11px]">
        <h2 className="text-[15px] font-bold">Markups List</h2>
        <button aria-label="Lists" className="ml-[6px]">
          <Chevron />
        </button>
        <button aria-label="Hide markups" className="ml-[13px]">
          <Icon>
            <path
              strokeWidth="1.2"
              d="M1 10C4 4.500 16 4.500 19 10C16 15.500 4 15.500 1 10ZM18 2L2 18"
            />
            <circle cx="10" cy="10" r="3" />
          </Icon>
        </button>
        <div className="ml-[9px] flex h-[26px] w-[326px] items-center rounded-[2px] border border-[#8a8a8a] pr-[6px] pl-[5px]">
          <Icon w={16}>
            <circle cx="6.5" cy="6.5" r="5" strokeWidth="1.2" />
            <path strokeWidth="1.2" d="M10.5 10.5L15 15" />
          </Icon>
          <input
            type="text"
            aria-label="Search markups"
            placeholder="Search"
            className="ml-2 min-w-0 flex-1 bg-transparent pb-[2px] text-xs font-medium outline-none placeholder:text-white"
          />
          <button aria-label="Clear search">
            <CloseX className="text-[#bbb]" />
          </button>
        </div>
        <button className="ml-7 flex items-center gap-[6px] text-[15px] font-bold">
          <Icon w={14} d="M.5 1.5H13.5L9 7V11L5.5 13.5V7Z" />
          Filter List
        </button>
        <button aria-label="Export" className="ml-[35px]">
          <Icon d="M6 7.5H3.5V18.5H16.5V7.5H14M10 14V1.5M7 4.5L10 1.5L13 4.5" />
        </button>
        <button aria-label="Expand" className="ml-auto">
          <Icon w={10}>
            <path strokeWidth="1.3" d="M1 1.5L4.5 5L1 8.5M5.5 1.5L9 5L5.5 8.5" />
          </Icon>
        </button>
      </div>
      <MarkupsTable />
      <div className="flex h-4 bg-[#f0f0f0]">
        <ScrollArrow label="Scroll list left" d="M7 1L3 5L7 9" />
        <div className="flex-[697] bg-[#cdcdcd]" />
        <div className="flex-[362]" />
        <ScrollArrow label="Scroll list right" d="M3 1L7 5L3 9" />
      </div>
    </div>
  </section>
);

/* ---------- measurements panel ---------- */

const Heading = (props: { children: string }) => (
  <h3 className="my-[9px] h-[25px]">
    <button className="flex h-full items-center gap-[14px] pl-[18px]">
      <Chevron />
      {props.children}
    </button>
  </h3>
);

const Row = (props: {
  label?: string;
  htmlFor?: string;
  short?: boolean;
  children: React.ReactNode;
}) => (
  <div className={"flex items-center gap-[10px] pr-[10px] " + (props.short ? "h-5" : "h-[25px]")}>
    <label htmlFor={props.htmlFor} className="w-[69px] shrink-0 text-right">
      {props.label}
    </label>
    {props.children}
  </div>
);

const Viewports = () => (
  <section className="relative">
    <Heading>Viewports</Heading>
    <div className="-mt-[2px] mr-[10px] ml-[13px] h-[119px] rounded-[3px] border border-[#8a8a8a] pt-2">
      <div className="flex items-center pr-[14px] pl-4">
        <label htmlFor="viewport" className="w-[91px]">
          Viewport
        </label>
        <Select id="viewport" label="Viewport" value={`1/4" = 1'-0"`} className="w-[100px]" />
        <button aria-label="Viewport options" className="ml-auto">
          <Icon w={20} h={4}>
            <g fill="currentColor" stroke="none">
              <circle cx="3" cy="2" r="1.6" />
              <circle cx="10" cy="2" r="1.6" />
              <circle cx="17" cy="2" r="1.6" />
            </g>
          </Icon>
        </button>
      </div>
    </div>
    <div className="mt-2 flex h-6 items-center pr-[12px] pl-[25px]">
      <button aria-label="Add viewport">
        <Icon w={11} d="M5.5 0V11M0 5.5H11" />
      </button>
      <button aria-label="Move up" className="mt-1 ml-[26px] text-[#777]">
        <Icon w={12} h={8} d="M1 7L6 1L11 7" />
      </button>
      <button aria-label="Delete viewport" className="ml-auto">
        <Icon w={16} h={20} d="M2.5 5.5H13.5V18.5H2.5ZM.5 3.5H15.5M5.5 3.5V1.5H10.5V3.5M5.5 8V16M8 8V16M10.5 8V16" />
      </button>
      <button aria-label="Delete options" className="ml-[7px]">
        <Chevron />
      </button>
    </div>
    <div className="pointer-events-none absolute -top-2 -left-[7px] z-10 h-9 w-[145px] border-[3px] border-[#fe4343] drop-shadow-[2px_2px_2px_rgba(0,0,0,0.6)]" />
    <svg
      viewBox="1162 724 190 142"
      className="pointer-events-none absolute top-[67px] -left-[10px] z-10 h-[142px] w-[190px] drop-shadow-[2px_3px_3px_rgba(0,0,0,0.6)]"
      aria-hidden="true"
    >
      <path
        d="M1190 807L1339 855L1329 755"
        fill="none"
        stroke="#fe4343"
        strokeWidth="10"
        strokeLinejoin="round"
      />
      <path fill="#fe4343" d="M1165 798L1198 792L1188 821ZM1327 730L1345 758L1315 761Z" />
    </svg>
  </section>
);

const MeasurementsPanel = () => (
  <aside className="ml-[2px] w-[322px] shrink-0 bg-[#2e2e2e] text-xs text-white">
    <div className="flex h-[35px] items-center gap-[10px] pl-[13px]">
      <h2 className="text-[15px] font-bold">Measurements</h2>
      <button aria-label="Panel menu">
        <Chevron />
      </button>
    </div>
    <div className="mt-[7px] mb-[12px] flex h-[35px] items-center pr-[11px] pl-6">
      <button aria-label="Length">
        <LengthIcon />
      </button>
      <button
        aria-label="Polylength"
        className="mr-[5px] ml-[13px] flex h-[25px] w-8 items-center justify-center bg-[#185a87]"
      >
        <PolylengthIcon />
      </button>
      <Chevron />
      <button aria-label="Area" className="mr-[11px] ml-[13px]">
        <AreaIcon />
      </button>
      <Chevron />
      <button aria-label="Diameter" className="ml-[14px]">
        <DiameterIcon />
      </button>
      <button aria-label="Angle" className="ml-4">
        <AngleIcon />
      </button>
      <button
        aria-label="More measurements"
        className="ml-auto flex h-[35px] w-5 items-center justify-center bg-[#404040]"
      >
        <Chevron />
      </button>
    </div>

    <Heading>Page Scale</Heading>
    <div className="flex flex-col gap-[6px]">
      <Row label="Page:">
        <span>1</span>
        <button className="ml-auto flex h-[25px] w-[172px] items-center gap-1 rounded-[3px] border border-[#8a8a8a] bg-[#3c3c3c] pl-[5px]">
          <Icon w={16} d="M3.5 1.5H1.5V13.5H3.5M6.5 1.5H4.5V13.5H6.5M13.5 6V4L11 1.5H7.5V13.5H9M9 8.5H15M13 6.5L15 8.5M15 11.5H9M11 13.5L9 11.5" />
          Add Scale to More Pages
        </button>
      </Row>
      <Row label="Scale:">
        <button className="h-[25px] w-[71px] rounded-[3px] border border-[#8a8a8a] bg-[#3c3c3c]">
          Calibrate
        </button>
      </Row>
      <Row short>
        <input
          type="radio"
          name="scale"
          id="preset"
          defaultChecked
          className="h-[15px] w-[15px] appearance-none rounded-full border border-[#8a8a8a] checked:bg-[radial-gradient(circle,#fff_3px,transparent_4px)]"
        />
        <label htmlFor="preset" className="mr-1">
          Preset
        </label>
        <input
          type="radio"
          name="scale"
          id="custom"
          className="h-[15px] w-[15px] appearance-none rounded-full border border-[#8a8a8a] checked:bg-[radial-gradient(circle,#fff_3px,transparent_4px)]"
        />
        <label htmlFor="custom">Custom</label>
      </Row>
      <Row>
        <Select label="Preset scale" value={`1/16" = 1'-0"`} className="flex-1" />
      </Row>
      <Row short>
        <input
          type="checkbox"
          id="separate-y"
          className="h-[15px] w-[15px] appearance-none rounded-[2px] border border-[#8a8a8a] checked:bg-[#185a87]"
        />
        <label htmlFor="separate-y">Separate Y Scale</label>
      </Row>
      <Row label="Precision:" htmlFor="precision">
        <Select id="precision" label="Precision" value="1/4" className="w-[71px]" />
      </Row>
    </div>

    <Heading>Polylength Measurement Properties</Heading>
    <div className="flex flex-col gap-[6px]">
      <Row label="Subject:" htmlFor="subject">
        <input
          id="subject"
          className={field + " min-w-0 flex-1 pl-[5px]"}
          defaultValue="Polylength Measurement"
        />
      </Row>
      <Row label="Label:" htmlFor="label">
        <input id="label" className={field + " min-w-0 flex-1 pl-[5px]"} />
      </Row>
      <Row label="Depth:" htmlFor="depth">
        <input id="depth" className={field + " min-w-0 flex-1 pl-[5px]"} defaultValue={`0'-0"`} />
        <Select label="Depth unit" value={`ft' in"`} className="w-[62px]" />
      </Row>
      <Row label="Rise/Drop:" htmlFor="rise">
        <input id="rise" className={field + " min-w-0 flex-1 pl-[5px]"} defaultValue={`0'-0"`} />
        <span className="w-[62px]">ft' in"</span>
      </Row>
      <Row label="Length:" htmlFor="length">
        <Select id="length" label="Length" value={`ft' in"`} className="flex-1" />
      </Row>
      <Row label="Area:" htmlFor="area">
        <Select id="area" label="Area" value="sf" className="flex-1" />
      </Row>
      <Row>
        <div className={field + " flex w-[52px] overflow-hidden"}>
          <button
            aria-label="Curve"
            className="flex w-[31px] items-center justify-center bg-[#185a87]"
          >
            <CurveIcon />
          </button>
          <button
            aria-label="Curve options"
            className="flex flex-1 items-center justify-center border-l border-[#8a8a8a]"
          >
            <Chevron />
          </button>
        </div>
        <IconDrop label="Caption alignment" className="w-11">
          <AlignIcon />
        </IconDrop>
      </Row>
    </div>

    <Viewports />
  </aside>
);

const RightRail = () => (
  <aside className="ml-px flex w-[35px] shrink-0 flex-col bg-[#2e2e2e] text-white">
    <button
      aria-label="Measurements"
      className="flex h-[35px] items-center justify-center bg-[#185a87] pr-px pb-px"
    >
      <RulerIcon />
    </button>
    <button aria-label="Settings" className="flex h-[35px] items-center justify-center pr-px pb-px">
      <Icon>
        <path
          strokeWidth="1.2"
          d="M8.5 1H11.5L12.2 3.2L14 4L16 3L18 5L17 7L17.7 8.5L19.5 9V11.5L17.5 12.2L17 14L18 16L16 18L14 17L12 17.7L11.5 19.5H8.5L7.8 17.5L6 17L4 18L2 16L3 14L2.3 12.2L.5 11.5V9L2.5 8.2L3 6.5L2 4.5L4 2.5L6 3.5L7.8 3Z"
        />
        <circle cx="10" cy="10.2" r="5" strokeWidth="1.2" />
      </Icon>
    </button>
  </aside>
);

const App = () => {
  return (
    <div className="flex min-h-screen flex-col bg-black px-[3px] pb-[3px] font-[Roboto,sans-serif] leading-4">
      <TitleBar />
      <MainToolbar />
      <PropertyBar />
      <div className="mt-px flex flex-1">
        <LeftRail />
        <main className="ml-[2px] flex min-w-0 flex-1 flex-col">
          <DocumentView />
          <StatusBar />
          <MarkupsPanel />
        </main>
        <MeasurementsPanel />
        <RightRail />
      </div>
    </div>
  );
};

export default App;
